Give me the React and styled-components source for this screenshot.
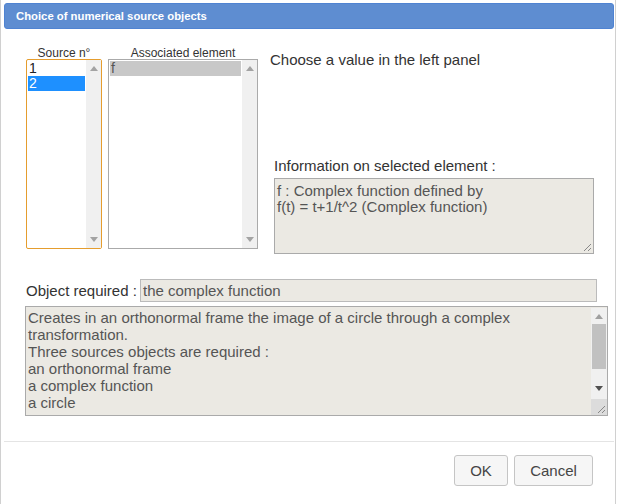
import React from 'react'
import styled, { createGlobalStyle } from 'styled-components'

const Global = createGlobalStyle`
  html, body { margin: 0; padding: 0; background: #fff; }
  body { font-family: "Liberation Sans", Arial, sans-serif; color: #333; overflow: hidden; }
`

const Dialog = styled.div`
  width: 616px;
  height: 520px;
  border-left: 1px solid #d0d0d0;
  border-right: 1px solid #d0d0d0;
  padding: 3px 1px 0 3px;
  box-sizing: border-box;
  display: flex;
  flex-direction: column;
`

const TitleBar = styled.div`
  height: 26px;
  background: #5e8dd1;
  border: 1px solid #4f83d2;
  border-radius: 3px;
  color: #fff;
  font-weight: bold;
  font-size: 11.3px;
  display: flex;
  align-items: center;
  padding-left: 11px;
  box-sizing: border-box;
`

const Content = styled.div`
  padding: 16px 0 0 22px;
  display: flex;
  flex-direction: column;
`

const TopRow = styled.div`
  display: flex;
  height: 210px;
`

const ListGroup = styled.div`
  width: ${p => p.$w}px;
  margin-right: ${p => p.$gap || 0}px;
  display: flex;
  flex-direction: column;
`

const ListLabel = styled.div`
  font-size: 12px;
  color: #333;
  text-align: center;
  height: 14px;
  line-height: 17px;
`

const ListBox = styled.div`
  height: 190px;
  border: 1px solid ${p => (p.$focus ? '#e59d2e' : '#aaa')};
  border-radius: ${p => (p.$focus ? '2px' : '0')};
  display: flex;
  box-sizing: border-box;
  background: #fff;
`

const Items = styled.div`
  flex: 1;
  padding: 1px 1px;
`

const Item = styled.div`
  font-size: 14px;
  line-height: 15px;
  height: 15px;
  padding-left: 1px;
  color: ${p => (p.$sel === 'blue' ? '#fff' : p.$sel === 'gray' ? '#555' : '#222')};
  background: ${p => (p.$sel === 'blue' ? '#1e90ff' : p.$sel === 'gray' ? '#c8c8c8' : 'transparent')};
`

const Scroll = styled.div`
  width: 15px;
  background: #f0f0f0;
  display: flex;
  flex-direction: column;
  justify-content: space-between;
  align-items: center;
  padding: 6px 0;
  box-sizing: border-box;
  position: relative;
`

const Thumb = styled.div`
  position: absolute;
  left: 1px;
  right: 1px;
  top: 16px;
  height: 45px;
  background: #c1c1c1;
`

const Arrow = ({ down, color = '#a3a3a3' }) => (
  <svg width="8" height="5" viewBox="0 0 8 5">
    <path d={down ? 'M0 0 L8 0 L4 5 Z' : 'M0 5 L8 5 L4 0 Z'} fill={color} />
  </svg>
)

const Grip = styled.svg`
  position: absolute;
  right: 1px;
  bottom: 1px;
`

const ResizeGrip = () => (
  <Grip width="9" height="9" viewBox="0 0 9 9">
    <path d="M8 1 L1 8 M8 5 L5 8" stroke="#888" strokeWidth="1" />
  </Grip>
)

const RightCol = styled.div`
  flex: 1;
  display: flex;
  flex-direction: column;
  padding-left: 12px;
`

const Hint = styled.div`
  font-size: 15px;
  line-height: 17px;
  color: #333;
  margin-top: 6px;
`

const InfoLabel = styled.div`
  font-size: 15px;
  line-height: 17px;
  color: #333;
  margin: 89px 0 4px 4px;
`

const TextArea = styled.div`
  position: relative;
  background: #ebe9e3;
  border: 1px solid #aaa;
  box-sizing: border-box;
  width: ${p => p.$w}px;
  height: ${p => p.$h}px;
  margin: ${p => p.$mt || 0}px 0 0 ${p => p.$ml || 0}px;
  font-size: 15px;
  line-height: ${p => p.$lh || 17}px;
  color: #555;
  padding: ${p => p.$pt || 1}px 2px 1px;
  display: flex;
`

const TextBody = styled.div`
  flex: 1;
  white-space: pre-line;
`

const AreaScroll = styled(Scroll)`
  width: 16px;
  margin: -1px -2px -1px 0;
  padding: 6px 0 24px;
  background: #f0f0f0;
`

const Corner = styled.div`
  position: absolute;
  right: 0;
  bottom: 0;
  width: 16px;
  height: 16px;
  background: #dcdcdc;
`

const ObjRow = styled.div`
  display: flex;
  align-items: center;
  margin-top: 24px;
  height: 23px;
`

const ObjLabel = styled.span`
  font-size: 15px;
  color: #333;
  width: 114px;
`

const ObjInput = styled.div`
  width: 457px;
  height: 23px;
  box-sizing: border-box;
  background: #ebe9e3;
  border: 1px solid #bbb;
  font-size: 15px;
  color: #555;
  line-height: 21px;
  padding-left: 2px;
`

const Separator = styled.div`
  margin-top: 25px;
  height: 1px;
  background: #e4e4e4;
`

const ButtonBar = styled.div`
  display: flex;
  justify-content: flex-end;
  gap: 6px;
  padding: 13px 21px 0 0;
`

const Button = styled.button`
  width: ${p => p.$w}px;
  height: 31px;
  background: #f6f6f6;
  border: 1px solid #c5c5c5;
  border-radius: 3px;
  font-family: "Liberation Sans", Arial, sans-serif;
  font-size: 15px;
  color: #454545;
  padding: 0;
`

export default function App() {
  return (
    <>
      <Global />
      <Dialog>
        <TitleBar>Choice of numerical source objects</TitleBar>
        <Content>
          <TopRow>
            <ListGroup $w={76} $gap={6}>
              <ListLabel>Source n°</ListLabel>
              <ListBox $focus>
                <Items>
                  <Item>1</Item>
                  <Item $sel="blue">2</Item>
                </Items>
                <Scroll>
                  <Arrow />
                  <Arrow down />
                </Scroll>
              </ListBox>
            </ListGroup>
            <ListGroup $w={150}>
              <ListLabel>Associated element</ListLabel>
              <ListBox>
                <Items>
                  <Item $sel="gray">f</Item>
                </Items>
                <Scroll>
                  <Arrow />
                  <Arrow down />
                </Scroll>
              </ListBox>
            </ListGroup>
            <RightCol>
              <Hint>Choose a value in the left panel</Hint>
              <InfoLabel>Information on selected element :</InfoLabel>
              <TextArea $w={320} $h={76} $ml={4} $pt={4} $lh={16}>
                <TextBody>{'f : Complex function defined by\nf(t) = t+1/t^2 (Complex function)'}</TextBody>
                <ResizeGrip />
              </TextArea>
            </RightCol>
          </TopRow>
          <ObjRow>
            <ObjLabel>Object required :</ObjLabel>
            <ObjInput>the complex function</ObjInput>
          </ObjRow>
          <TextArea $w={583} $h={110} $mt={4} $ml={-1} $pt={2}>
            <TextBody>
              {'Creates in an orthonormal frame the image of a circle through a complex\ntransformation.\nThree sources objects are required :\nan orthonormal frame\na complex function\na circle'}
            </TextBody>
            <AreaScroll>
              <Arrow color="#a0a0a0" />
              <Thumb />
              <Arrow down color="#505050" />
            </AreaScroll>
            <Corner />
            <ResizeGrip />
          </TextArea>
        </Content>
        <Separator />
        <ButtonBar>
          <Button $w={54}>OK</Button>
          <Button $w={79}>Cancel</Button>
        </ButtonBar>
      </Dialog>
    </>
  )
}
